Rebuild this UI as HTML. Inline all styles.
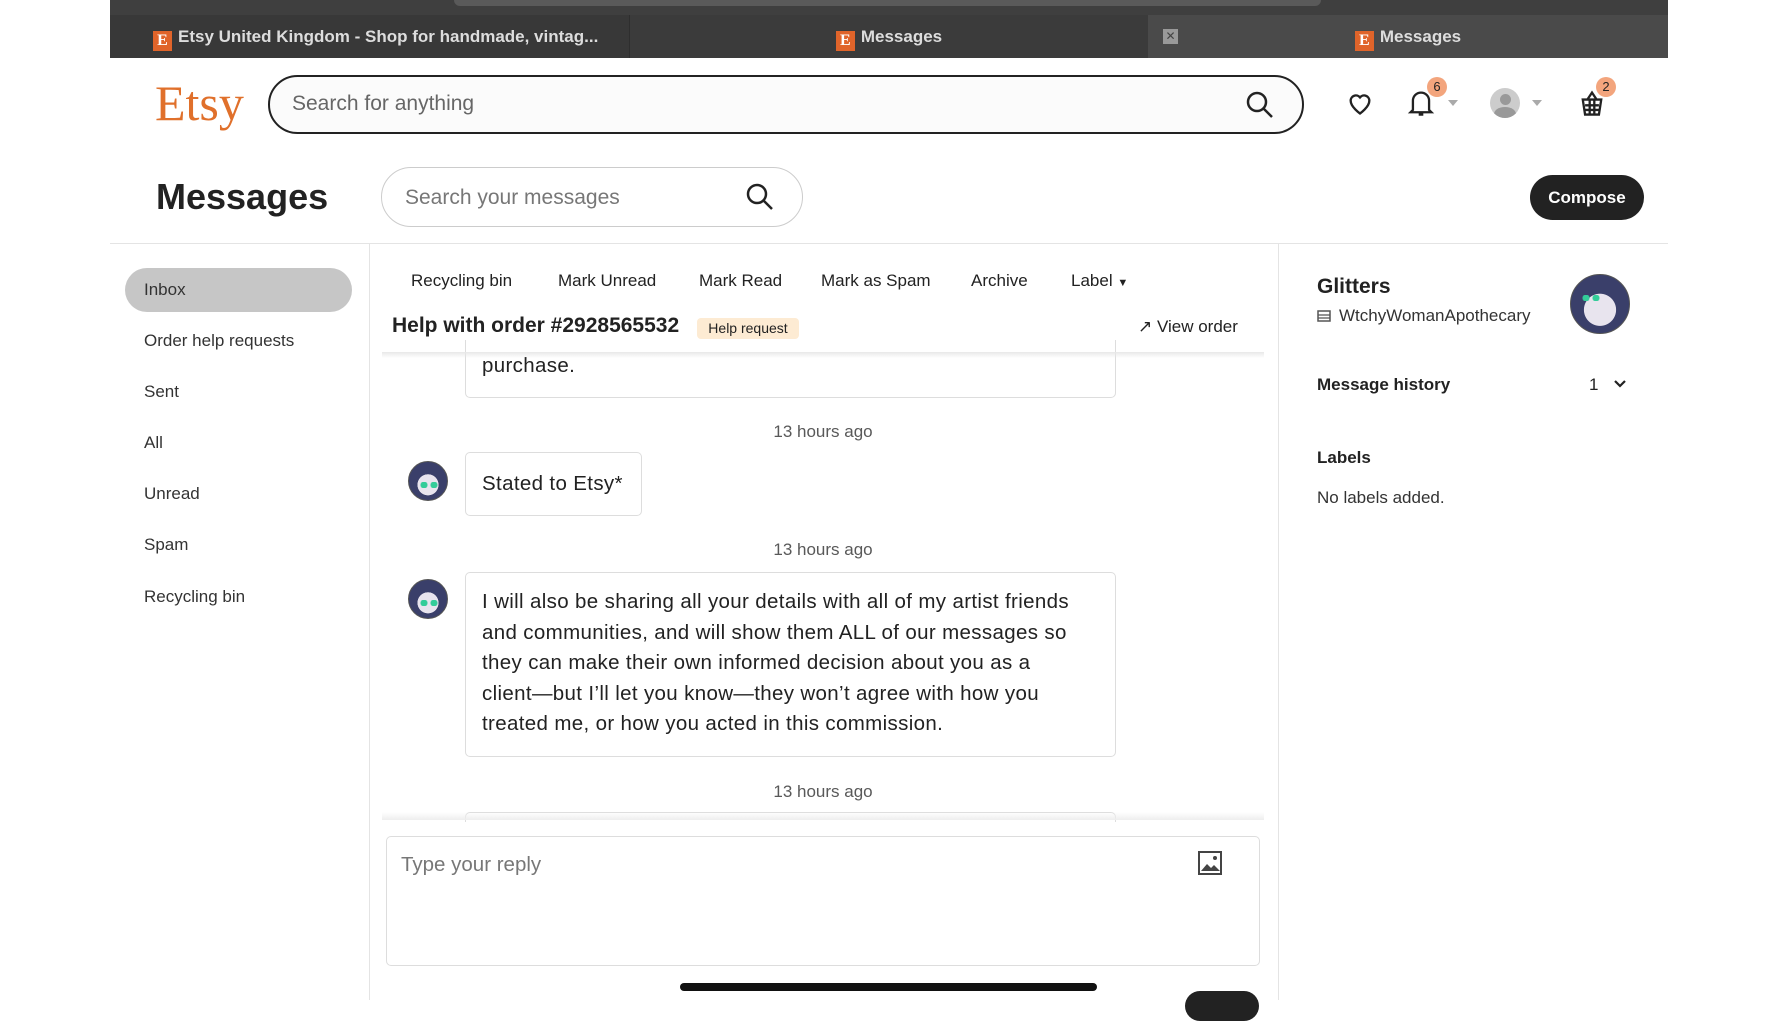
<!DOCTYPE html>
<html><head><meta charset="utf-8"><style>
*{margin:0;padding:0;box-sizing:border-box}
html,body{width:1778px;height:1000px}
body{background:#fff;font-family:"Liberation Sans",Arial,sans-serif;color:#222;position:relative;overflow:hidden}
.a{position:absolute;white-space:nowrap}
.tab{position:absolute;top:15px;height:43px;color:#ddd;font-weight:bold;font-size:17px;line-height:43px}
.fav{display:inline-block;width:19px;height:20px;background:#e0642a;color:#fff;font-family:"Liberation Serif",serif;font-size:16px;line-height:20px;text-align:center;vertical-align:-3px;margin-right:6px}
.side{position:absolute;left:144px;font-size:17px;color:#333;transform:translateY(-50%)}
.tb{position:absolute;top:281px;font-size:17px;color:#222;transform:translateY(-50%)}
.time{position:absolute;left:0;width:100%;text-align:center;font-size:17px;color:#595959;transform:translateY(-50%)}
.bub{position:absolute;border:1px solid #ddd;border-radius:5px;background:#fff;font-size:20.5px;color:#222;line-height:30.6px;letter-spacing:0.35px;white-space:nowrap}
.av{position:absolute;width:40px;height:40px;border-radius:50%;background:radial-gradient(circle at 50% 60%,#e8e4ee 0 35%,#3a3f6a 36% 100%);border:1px solid #555}
.av::after{content:"";position:absolute;left:10px;top:20px;width:20px;height:6px;background:radial-gradient(circle at 25% 50%,#3c9 0 3px,transparent 4px),radial-gradient(circle at 75% 50%,#3c9 0 3px,transparent 4px)}
</style></head><body>
<div class="a" style="left:110px;top:0;width:1558px;height:58px;background:#3f3f3f"></div>
<div class="a" style="left:454px;top:0;width:867px;height:6px;background:#5a5a5a;border-radius:0 0 6px 6px"></div>
<div class="tab" style="left:110px;width:519px;background:#383838;padding-left:43px"><span class="fav">E</span>Etsy United Kingdom - Shop for handmade, vintag...</div>
<div class="tab" style="left:629px;width:519px;background:#3b3b3b;text-align:center;border-left:1px solid #2e2e2e"><span class="fav">E</span>Messages</div>
<div class="tab" style="left:1148px;width:520px;background:#4a4a4a;text-align:center"><span class="fav">E</span>Messages</div>
<div class="a" style="left:1163px;top:29px;width:15px;height:15px;background:#999;color:#444;font-size:12px;line-height:15px;text-align:center">✕</div>

<div class="a" style="left:155px;top:74px;font-family:'Liberation Serif',serif;font-size:50px;color:#e0702b">Etsy</div>
<div class="a" style="left:268px;top:75px;width:1036px;height:59px;border:2.5px solid #222;border-radius:30px;background:#fbfbfb"></div>
<div class="a" style="left:292px;top:92px;font-size:21px;color:#666">Search for anything</div>
<svg class="a" style="left:1245px;top:90px" width="30" height="30" viewBox="0 0 30 30"><circle cx="12" cy="12" r="9" fill="none" stroke="#222" stroke-width="2.5"/><path d="M19 19l8 8" stroke="#222" stroke-width="2.5"/></svg>
<svg class="a" style="left:1346px;top:89px" width="28" height="28" viewBox="0 0 24 24"><path d="M12 21s-8-5.5-8-11a4.5 4.5 0 0 1 8-2.8A4.5 4.5 0 0 1 20 10c0 5.5-8 11-8 11z" fill="none" stroke="#222" stroke-width="2"/></svg>
<svg class="a" style="left:1407px;top:88px" width="28" height="30" viewBox="0 0 24 26"><path d="M5 19V11a7 7 0 0 1 14 0v8l2 2H3z M10 23h4" fill="none" stroke="#222" stroke-width="2"/></svg>
<div class="a" style="left:1427px;top:77px;width:20px;height:20px;border-radius:50%;background:#f3a57d;font-size:13px;text-align:center;line-height:20px">6</div>
<div class="a" style="left:1448px;top:100px;border:5px solid transparent;border-top:6px solid #aaa"></div>
<div class="a" style="left:1490px;top:88px;width:30px;height:30px;border-radius:50%;background:#ccc;overflow:hidden"><div style="margin:6px auto 0;width:11px;height:11px;border-radius:50%;background:#999"></div><div style="margin:2px auto;width:22px;height:14px;border-radius:50%;background:#999"></div></div>
<div class="a" style="left:1532px;top:100px;border:5px solid transparent;border-top:6px solid #aaa"></div>
<svg class="a" style="left:1578px;top:88px" width="28" height="30" viewBox="0 0 24 26"><path d="M4 10h16l-2 13H6z M8 10l4-6 4 6 M6 15h12 M6 19h12 M10 10v13 M14 10v13" fill="none" stroke="#222" stroke-width="2"/></svg>
<div class="a" style="left:1596px;top:77px;width:20px;height:20px;border-radius:50%;background:#f3a57d;font-size:13px;text-align:center;line-height:20px">2</div>

<div class="a" style="left:156px;top:176px;font-size:36px;font-weight:bold;color:#222">Messages</div>
<div class="a" style="left:381px;top:167px;width:422px;height:60px;border:1px solid #ccc;border-radius:30px"></div>
<div class="a" style="left:405px;top:186px;font-size:21px;color:#777">Search your messages</div>
<svg class="a" style="left:745px;top:182px" width="30" height="30" viewBox="0 0 30 30"><circle cx="12" cy="12" r="9" fill="none" stroke="#222" stroke-width="2.5"/><path d="M19 19l8 8" stroke="#222" stroke-width="2.5"/></svg>
<div class="a" style="left:1530px;top:175px;width:114px;height:45px;border-radius:23px;background:#222;color:#fff;font-size:17px;font-weight:bold;text-align:center;line-height:45px">Compose</div>

<div class="a" style="left:110px;top:243px;width:1558px;height:1px;background:#e4e4e4"></div>
<div class="a" style="left:369px;top:243px;width:1px;height:757px;background:#e4e4e4"></div>
<div class="a" style="left:1278px;top:243px;width:1px;height:757px;background:#e4e4e4"></div>

<div class="a" style="left:125px;top:268px;width:227px;height:44px;border-radius:22px;background:#c6c6c6"></div>
<div class="side" style="top:290px">Inbox</div>
<div class="side" style="top:341px">Order help requests</div>
<div class="side" style="top:392px">Sent</div>
<div class="side" style="top:443px">All</div>
<div class="side" style="top:494px">Unread</div>
<div class="side" style="top:545px">Spam</div>
<div class="side" style="top:597px">Recycling bin</div>

<div class="tb" style="left:411px">Recycling bin</div>
<div class="tb" style="left:558px">Mark Unread</div>
<div class="tb" style="left:699px">Mark Read</div>
<div class="tb" style="left:821px">Mark as Spam</div>
<div class="tb" style="left:971px">Archive</div>
<div class="tb" style="left:1071px">Label <span style="font-size:11px">▼</span></div>

<div class="a" style="left:392px;top:314px;font-size:21px;font-weight:bold;color:#222">Help with order #2928565532</div>
<div class="a" style="left:697px;top:318px;width:102px;height:21px;background:#fdebd3;border-radius:4px;font-size:14px;text-align:center;line-height:21px">Help request</div>
<div class="a" style="left:1138px;top:317px;font-size:17px;color:#222">↗ View order</div>

<div class="bub" style="left:465px;top:340px;width:651px;height:58px;border-top:none;border-radius:0 0 5px 5px;padding:11px 16px">purchase.</div>
<div class="a" style="left:382px;top:352px;width:882px;height:6px;background:linear-gradient(#e8e8e8,rgba(255,255,255,0))"></div>
<div class="a" style="left:382px;top:0;width:882px;height:1000px">
<div class="time" style="top:432px">13 hours ago</div>
<div class="time" style="top:550px">13 hours ago</div>
<div class="time" style="top:792px">13 hours ago</div>
</div>
<div class="av" style="left:408px;top:461px"></div>
<div class="bub" style="left:465px;top:452px;width:177px;height:64px;padding:16px">Stated to Etsy*</div>
<div class="av" style="left:408px;top:579px"></div>
<div class="bub" style="left:465px;top:572px;width:651px;height:185px;padding:14px 16px">I will also be sharing all your details with all of my artist friends<br>and communities, and will show them ALL of our messages so<br>they can make their own informed decision about you as a<br>client—but I’ll let you know—they won’t agree with how you<br>treated me, or how you acted in this commission.</div>
<div class="a" style="left:465px;top:812px;width:651px;height:10px;border:1px solid #ddd;border-bottom:none;border-radius:5px 5px 0 0"></div>
<div class="a" style="left:382px;top:812px;width:882px;height:8px;background:linear-gradient(rgba(255,255,255,0),#eee)"></div>

<div class="a" style="left:386px;top:836px;width:874px;height:130px;border:1.5px solid #ddd;border-radius:5px"></div>
<div class="a" style="left:401px;top:853px;font-size:20.5px;color:#777">Type your reply</div>
<svg class="a" style="left:1197px;top:850px" width="26" height="26" viewBox="0 0 26 26"><rect x="2" y="2" width="22" height="22" fill="none" stroke="#444" stroke-width="2"/><path d="M4 21l6-7 4 4 3-3 6 6z" fill="#444"/><circle cx="18" cy="8" r="2" fill="#444"/></svg>
<div class="a" style="left:1185px;top:991px;width:74px;height:30px;border-radius:15px;background:#222"></div>
<div class="a" style="left:680px;top:983px;width:417px;height:8px;border-radius:4px;background:#111"></div>

<div class="a" style="left:1317px;top:275px;font-size:21px;font-weight:bold;color:#222">Glitters</div>
<svg class="a" style="left:1317px;top:309px" width="14" height="14" viewBox="0 0 14 14"><rect x="1" y="2" width="12" height="10" fill="none" stroke="#555" stroke-width="1.5"/><path d="M1 6h12M1 9h12" stroke="#555" stroke-width="1.2"/></svg>
<div class="a" style="left:1339px;top:306px;font-size:17px;color:#333">WtchyWomanApothecary</div>
<div class="av" style="left:1570px;top:274px;width:60px;height:60px"></div>
<div class="a" style="left:1317px;top:375px;font-size:17px;font-weight:bold;color:#222">Message history</div>
<div class="a" style="left:1589px;top:375px;font-size:17px">1</div>
<svg class="a" style="left:1613px;top:379px" width="14" height="10" viewBox="0 0 14 10"><path d="M2 2l5 5 5-5" fill="none" stroke="#222" stroke-width="2.2"/></svg>
<div class="a" style="left:1317px;top:448px;font-size:17px;font-weight:bold;color:#222">Labels</div>
<div class="a" style="left:1317px;top:488px;font-size:17px;color:#333">No labels added.</div>
</body></html>
